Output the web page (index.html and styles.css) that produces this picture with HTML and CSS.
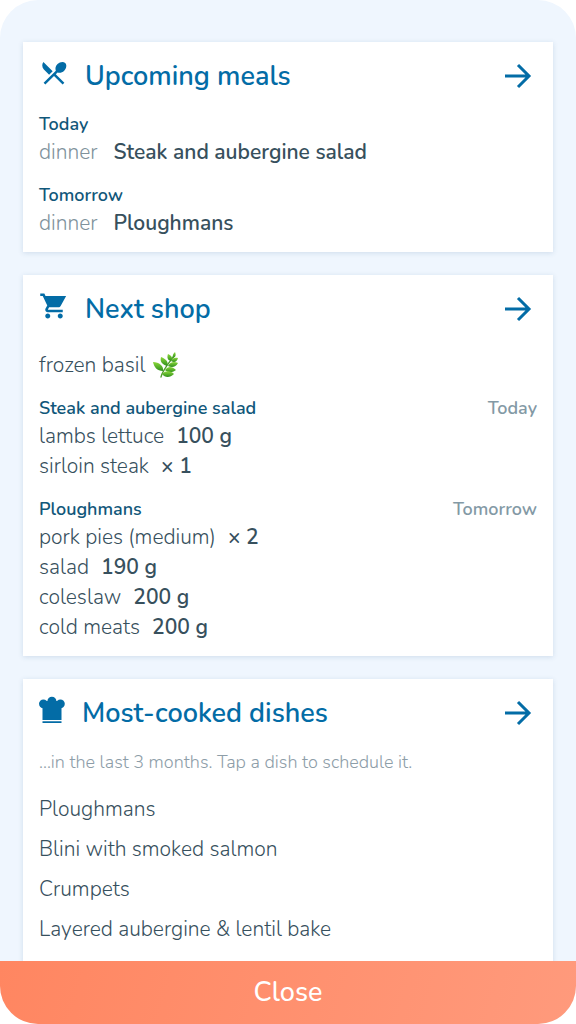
FILE: index.html
```html
<!DOCTYPE html>
<html lang="en">
<head>
<meta charset="utf-8">
<meta name="viewport" content="width=device-width, initial-scale=1">
<title>Meal planner</title>
<link rel="stylesheet" href="styles.css">
</head>
<body>
<div class="sheet">
  <main class="content">
    <section class="card">
      <header class="card-header">
        <svg class="icon" viewBox="0 0 24 24" aria-hidden="true"><path d="M8.1 13.34l2.83-2.83L3.500 3.100c-1.300 1.560-1.200 4.090.41 6.060l4.190 4.180zm6.780-1.810c1.530.71 3.680.21 5.270-1.380 1.910-1.910 2.280-4.650.81-6.120-1.460-1.460-4.200-1.100-6.120.81-1.590 1.590-2.090 3.740-1.380 5.270L3.700 19.870l1.410 1.410L12 14.410l6.880 6.880 1.410-1.410L13.410 13l1.470-1.470z"/></svg>
        <h2 class="title">Upcoming meals</h2>
        <a class="more" href="#meals" aria-label="All upcoming meals"><svg class="arrow" viewBox="0 0 28 28" aria-hidden="true"><path d="M1 14h24M14 3l11 11-11 11"/></svg></a>
      </header>
      <div class="group">
        <h3 class="label">Today</h3>
        <p class="row"><span class="meal">dinner</span><strong class="strong">Steak and aubergine salad</strong></p>
      </div>
      <div class="group">
        <h3 class="label">Tomorrow</h3>
        <p class="row"><span class="meal">dinner</span><strong class="strong">Ploughmans</strong></p>
      </div>
    </section>

    <section class="card">
      <header class="card-header">
        <svg class="icon" viewBox="0 0 24 24" aria-hidden="true"><path d="M7 18c-1.1 0-1.99.9-1.99 2S5.9 22 7 22s2-.9 2-2-.9-2-2-2zM1 2v2h2l3.6 7.59-1.35 2.45c-.16.28-.25.61-.25.96 0 1.1.9 2 2 2h12v-2H7.42c-.14 0-.25-.11-.25-.25l.03-.12.9-1.63h7.45c.75 0 1.41-.41 1.75-1.03L21.7 4H5.21l-.94-2H1zm16 16c-1.1 0-1.99.9-1.99 2s.89 2 1.99 2 2-.9 2-2-.9-2-2-2z"/></svg>
        <h2 class="title">Next shop</h2>
        <a class="more" href="#shop" aria-label="Open next shop"><svg class="arrow" viewBox="0 0 28 28" aria-hidden="true"><path d="M1 14h24M14 3l11 11-11 11"/></svg></a>
      </header>
      <p class="row extra">frozen basil
        <svg class="herb" viewBox="0 0 26 26" role="img" aria-label="herb">
          <defs><linearGradient id="leaf" x1="0" y1="0" x2="0" y2="1"><stop offset="0" stop-color="#8bd83a"/><stop offset="1" stop-color="#2f8f1c"/></linearGradient></defs>
          <path d="M8 25C9 19 15 12 21 4" fill="none" stroke="#4e9c2b" stroke-width="1.4" stroke-linecap="round"/>
          <g fill="url(#leaf)">
            <path d="M20 6c-1-3 1-5 2-6 1 3 1 5-2 6z"/>
            <path d="M18 9c-4-1-4-4-3-7 4 2 5 4 3 7z"/>
            <path d="M14 14C8 12 7 9 8 5c5 2 8 5 6 9z"/>
            <path d="M10 19C4 19 1 15 0 10c6 0 11 4 10 9z"/>
            <path d="M18 9c1-3 4-4 7-3-1 4-4 5-7 3z"/>
            <path d="M15 14c2-4 6-5 10-3-2 4-6 5-10 3z"/>
            <path d="M12 18c3-4 7-4 11 0-4 3-8 3-11 0z"/>
            <path d="M9 22c4-4 9-3 12 0-4 4-9 4-12 0z"/>
          </g>
        </svg>
      </p>
      <div class="group">
        <div class="group-head"><h3 class="label">Steak and aubergine salad</h3><span class="when">Today</span></div>
        <p class="row item"><span>lambs lettuce</span><strong class="strong">100 g</strong></p>
        <p class="row item"><span>sirloin steak</span><strong class="strong">× 1</strong></p>
      </div>
      <div class="group">
        <div class="group-head"><h3 class="label">Ploughmans</h3><span class="when">Tomorrow</span></div>
        <p class="row item"><span>pork pies (medium)</span><strong class="strong">× 2</strong></p>
        <p class="row item"><span>salad</span><strong class="strong">190 g</strong></p>
        <p class="row item"><span>coleslaw</span><strong class="strong">200 g</strong></p>
        <p class="row item"><span>cold meats</span><strong class="strong">200 g</strong></p>
      </div>
    </section>

    <section class="card">
      <header class="card-header">
        <svg class="icon hat" viewBox="0 0 27 30" aria-hidden="true">
          <circle cx="4.400" cy="8.800" r="4.400"/>
          <circle cx="12.900" cy="6.300" r="4.500"/>
          <circle cx="21.400" cy="8.800" r="4.400"/>
          <path d="M3.500 6h19v19h-19zM3.500 26.300h19v1.700h-19z"/>
        </svg>
        <h2 class="title">Most-cooked dishes</h2>
        <a class="more" href="#dishes" aria-label="All dishes"><svg class="arrow" viewBox="0 0 28 28" aria-hidden="true"><path d="M1 14h24M14 3l11 11-11 11"/></svg></a>
      </header>
      <p class="note">...in the last 3 months. Tap a dish to schedule it.</p>
      <div class="dishes">
        <button class="dish" type="button">Ploughmans</button>
        <button class="dish" type="button">Blini with smoked salmon</button>
        <button class="dish" type="button">Crumpets</button>
        <button class="dish" type="button">Layered aubergine &amp; lentil bake</button>
      </div>
    </section>
  </main>
  <button class="close" type="button">Close</button>
</div>
</body>
</html>
```
FILE: styles.css
```css
* {
  box-sizing: border-box;
}

body {
  margin: 0;
  background: #fff;
  color: #37505d;
  font-family: Nunito, "Open Sans", sans-serif;
  font-size: 21px;
  font-weight: 300;
  line-height: 30px;
}

h2, h3, p {
  margin: 0;
}

button {
  border: 0;
  padding: 0;
  background: none;
  color: inherit;
  font: inherit;
  cursor: pointer;
}

.sheet {
  display: flex;
  flex-direction: column;
  height: 100vh;
  overflow: hidden;
  border-radius: 38px;
  background: #eff6fe;
}

.content {
  display: flex;
  flex: 1;
  flex-direction: column;
  gap: 23px;
  min-height: 0;
  padding: 42px 23px 0;
  overflow-y: auto;
  scrollbar-width: none;
}

.card {
  flex: none;
  padding: 0 16px 14px;
  background: #fff;
  box-shadow: 0 1px 5px rgba(40, 90, 130, 0.16);
}

.card-header {
  display: flex;
  align-items: center;
  height: 69px;
}

.icon {
  flex: none;
  width: 30px;
  height: 30px;
  margin: 0 16px 8px 0;
  fill: #036ca6;
}

.hat {
  width: 27px;
}

.title {
  flex: 1;
  color: #036ca6;
  font-size: 27px;
  font-weight: 600;
  line-height: 36px;
}

.more {
  display: flex;
  padding: 0 5px 2px 0;
}

.arrow {
  width: 28px;
  height: 28px;
  fill: none;
  stroke: #036ca6;
  stroke-width: 3;
}

.group + .group,
.extra + .group {
  margin-top: 15px;
}

.group-head {
  display: flex;
  justify-content: space-between;
}

.label,
.when {
  font-size: 18px;
  font-weight: 600;
  line-height: 26px;
}

.label {
  color: #11577a;
}

.when {
  color: #8399a5;
}

.row {
  display: flex;
  gap: 16px;
}

.item {
  gap: 12px;
}

.meal {
  color: #80929c;
}

.strong {
  font-weight: 600;
}

.extra {
  align-items: center;
  gap: 8px;
  padding-top: 6px;
}

.herb {
  width: 26px;
  height: 26px;
}

.note {
  color: #8d9da8;
  font-size: 18px;
  line-height: 28px;
}

.dishes {
  display: flex;
  flex-direction: column;
  padding-top: 13px;
}

.dish {
  line-height: 40px;
  text-align: left;
}

.close {
  flex: none;
  height: 63px;
  background: linear-gradient(105deg, #ff8661, #ff9a7c);
  color: #fff;
  font-size: 27px;
  font-weight: 500;
}
```
